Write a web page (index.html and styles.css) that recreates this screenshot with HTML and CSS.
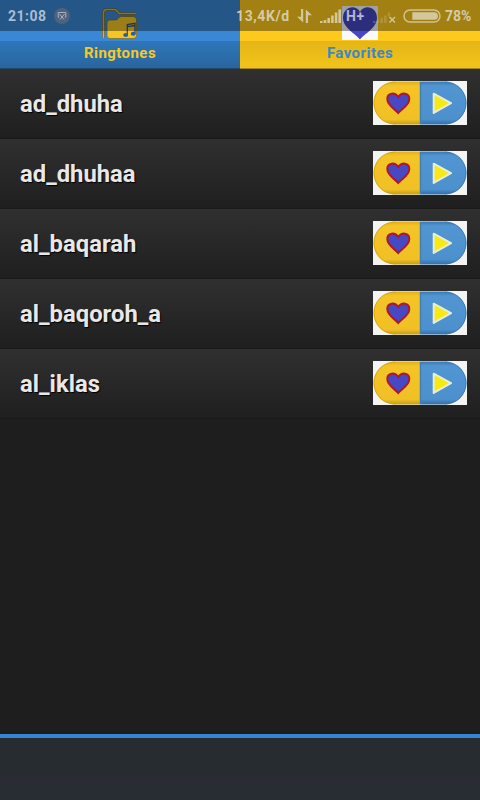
FILE: index.html
```
<!DOCTYPE html>
<html lang="en">
<head>
<meta charset="UTF-8" />
<meta name="viewport" content="width=device-width, initial-scale=1" />
<title>Ringtones</title>
<link rel="stylesheet" href="styles.css">
</head>
<body>

<!-- Shared icon: favorite / play button -->
<svg class="defs" aria-hidden="true">
  <defs>
    <linearGradient id="yellow" x1="0" y1="0" x2="0" y2="1">
      <stop offset="0" stop-color="#dcaf1c" />
      <stop offset="0.1" stop-color="#f5c427" />
      <stop offset="0.88" stop-color="#f0c024" />
      <stop offset="1" stop-color="#c69c16" />
    </linearGradient>
    <linearGradient id="blue" x1="0" y1="0" x2="0" y2="1">
      <stop offset="0" stop-color="#3c77ad" />
      <stop offset="0.1" stop-color="#5195d2" />
      <stop offset="0.88" stop-color="#4c90cd" />
      <stop offset="1" stop-color="#356ea5" />
    </linearGradient>
    <symbol id="actions" viewBox="0 0 94 44">
      <rect width="94" height="44" fill="#f4f4f2" />
      <path d="M22 0.5H47V43.5H22A21.5 21.5 0 0 1 22 0.5Z" fill="url(#yellow)" />
      <path d="M47 0.5H72A21.5 21.5 0 0 1 72 43.5H47Z" fill="url(#blue)" />
      <path d="M22 1A21 21 0 0 0 22 43" fill="none" stroke="#c99f17" stroke-opacity="0.7" />
      <path d="M72 1A21 21 0 0 1 72 43" fill="none" stroke="#3773ab" stroke-opacity="0.7" />
      <path d="M47.5 1V43" stroke="#4180b5" stroke-width="1.5" />
      <path d="M25.3 32C22 28 14.3 24.5 14.3 18C14.3 11.5 22 11 25.3 16C28.5 11 36.3 11.5 36.3 18C36.3 24.5 28.5 28 25.3 32Z" fill="#4648c6" stroke="#a81c2c" stroke-width="2" />
      <path d="M60.7 12.7L78 22.2L60.7 31.9Z" fill="#f8ea10" stroke="#e9edd8" stroke-width="2" stroke-linejoin="round" />
    </symbol>
  </defs>
</svg>

<div class="status-bar">
  <span class="time">21:08</span>
  <svg class="badge" viewBox="0 0 16 16">
    <circle cx="8" cy="8" r="8" fill="#50627b" />
    <path d="M5.2 9.2H4.2V4.5H11.8V9.2H10.8M5.5 6L10 11.5M10.5 6L6 11.5" fill="none" stroke="#a3b4c8" />
  </svg>
  <span class="speed">13,4K/d</span>
  <svg class="arrows" viewBox="0 0 15 14">
    <path d="M6.2 0V13.5L0 7.7H4V0ZM8.8 14V0.5L15 6.2H11V14Z" />
  </svg>
  <svg class="signal" viewBox="0 0 21 14">
    <path d="M0 12H2.6V14H0ZM3.7 11H6.3V14H3.7ZM7.4 9H10V14H7.4ZM11.1 6.5H13.7V14H11.1ZM14.8 3.5H17.4V14H14.8ZM18.4 0.5H21V14H18.4Z" />
  </svg>
  <span class="network">H+</span>
  <svg class="no-signal" viewBox="0 0 26 14">
    <path opacity="0.28" d="M0 12H2.5V14H0ZM3.7 11H6.2V14H3.7ZM7.4 9H9.9V14H7.4ZM11.1 6.5H13.6V14H11.1ZM14.8 3.5H17.3V7.5H14.8Z" />
    <path d="M16.5 8L22 13.5M22 8L16.5 13.5" stroke="#d3c79b" stroke-width="1.4" />
  </svg>
  <svg class="battery" viewBox="0 0 38 14">
    <rect x="1" y="1" width="36" height="12" rx="6" fill="none" stroke="#d0c391" stroke-width="1.5" />
    <path d="M9.3 3.2H31.2A3.8 3.8 0 0 1 31.2 10.8H9.3Z" />
  </svg>
  <span class="percent">78%</span>
</div>

<nav class="tabs">
  <a class="tab tab-ringtones">
    <svg class="folder" viewBox="0 0 36 32">
      <path d="M1.5 30V5Q1.5 1.5 5 1.5H12.5Q14 1.5 15 3L16.5 4.8Q17.3 5.5 18.5 5.5H34" fill="none" stroke="#4a5548" stroke-width="2.6" />
      <path d="M1.5 30V5Q1.5 1.5 5 1.5H12.5Q14 1.5 15 3L16.5 4.8Q17.3 5.5 18.5 5.5H34" fill="none" stroke="#e0b428" stroke-width="1.6" />
      <path d="M5 15Q5 12 8 12H13.5Q15 12 16 10.7L17 9.5Q18 8.5 19.5 8.5H31Q34.5 8.5 34.5 12V27.5Q34.5 30.5 31 30.5H8Q5 30.5 5 27.5Z" fill="#f5c526" stroke="#77682a" stroke-width="0.7" />
      <path d="M25.3 26.5V16.5L33 15.3V25.2M25.3 18.7L33 17.5" fill="none" stroke="#29577f" stroke-width="1.3" />
      <ellipse cx="23.7" cy="27.1" rx="2.5" ry="2" fill="#29609b" />
      <ellipse cx="31.3" cy="25.7" rx="2.5" ry="2" fill="#29609b" />
    </svg>
    <span>Ringtones</span>
  </a>
  <a class="tab tab-favorites">
    <svg class="heart" viewBox="0 0 36 34">
      <rect width="36" height="34" fill="#fafafa" />
      <path d="M18 33.5C14 28 1 22 1 12C1 0.5 14 -2 18 6C22 -2 35 0.5 35 12C35 22 22 28 18 33.5Z" fill="#4648c4" />
    </svg>
    <span>Favorites</span>
  </a>
</nav>

<ul class="list">
  <li><span>ad_dhuha</span><svg class="actions"><use href="#actions" /></svg></li>
  <li><span>ad_dhuhaa</span><svg class="actions"><use href="#actions" /></svg></li>
  <li><span>al_baqarah</span><svg class="actions"><use href="#actions" /></svg></li>
  <li><span>al_baqoroh_a</span><svg class="actions"><use href="#actions" /></svg></li>
  <li><span>al_iklas</span><svg class="actions"><use href="#actions" /></svg></li>
</ul>

<footer></footer>

</body>
</html>
```

FILE: styles.css
```
* {
  box-sizing: border-box;
}
body {
  margin: 0;
  height: 800px;
  display: flex;
  flex-direction: column;
  overflow: hidden;
  background: #1e1e1e;
  font-family: Roboto, sans-serif;
  font-weight: 700;
}
svg {
  display: block;
  flex: none;
}
.defs {
  position: absolute;
  width: 0;
  height: 0;
}

/* Status bar, drawn over the tabs */
.status-bar {
  position: absolute;
  top: 0;
  left: 0;
  z-index: 1;
  width: 480px;
  height: 31px;
  padding: 1px 0 0 8px;
  display: flex;
  align-items: center;
  background: rgba(0, 0, 0, 0.36);
  color: #d6cba3;
  fill: #d3c79b;
  font-size: 14px;
  font-weight: 700;
  white-space: nowrap;
}
.time {
  width: 46px;
  color: #a9bdd1;
  letter-spacing: 0.5px;
}
.badge {
  width: 16px;
  height: 16px;
}
.speed {
  width: 61px;
  margin-left: 166px;
  letter-spacing: 0.6px;
}
.arrows {
  width: 15px;
  height: 14px;
}
.signal {
  width: 21px;
  height: 14px;
  margin-left: 8px;
}
.network {
  width: 27px;
  margin-left: 5px;
  color: #b6b6d2;
  letter-spacing: 0.5px;
}
.no-signal {
  width: 26px;
  height: 14px;
}
.battery {
  width: 38px;
  height: 14px;
  margin-left: 4px;
}
.percent {
  margin-left: 4px;
  font-size: 14px;
}

/* Tabs */
.tabs {
  display: flex;
  flex: none;
  height: 69px;
}
.tab {
  flex: 1;
  display: flex;
  flex-direction: column;
  align-items: center;
  justify-content: flex-end;
  padding-bottom: 7px;
  font-size: 15px;
  line-height: 18px;
  letter-spacing: 0.45px;
}
.tab-ringtones {
  background: linear-gradient(#3987d5 41px, #2e77b9 41px, #29659f 68px, #22476b 68px);
  color: #f5c92a;
}
.tab-favorites {
  background: linear-gradient(#fdc91c 41px, #e4b515 41px, #f2c41b 68px, #a78416 68px);
  color: #3b87cb;
}
.folder {
  width: 36px;
  height: 32px;
  margin-bottom: 4px;
}
.heart {
  width: 36px;
  height: 34px;
  margin-bottom: 4px;
}

/* Ringtone list */
.list {
  flex: 1;
  margin: 0;
  padding: 0;
  list-style: none;
}
.list li {
  height: 70px;
  padding: 0 13px 1px 20px;
  display: flex;
  align-items: center;
  justify-content: space-between;
  background: linear-gradient(#303030, #1f1f1f);
  border-bottom: 1px solid #191919;
  color: #e8e8e8;
  font-size: 23.8px;
  text-shadow: 1px 1px 1px #000;
}
.list span {
  padding-top: 2px;
}
.actions {
  width: 94px;
  height: 44px;
}

footer {
  flex: none;
  height: 66px;
  border-top: 4px solid #3585d3;
  background: linear-gradient(#262c2f, #292c34);
}
```
